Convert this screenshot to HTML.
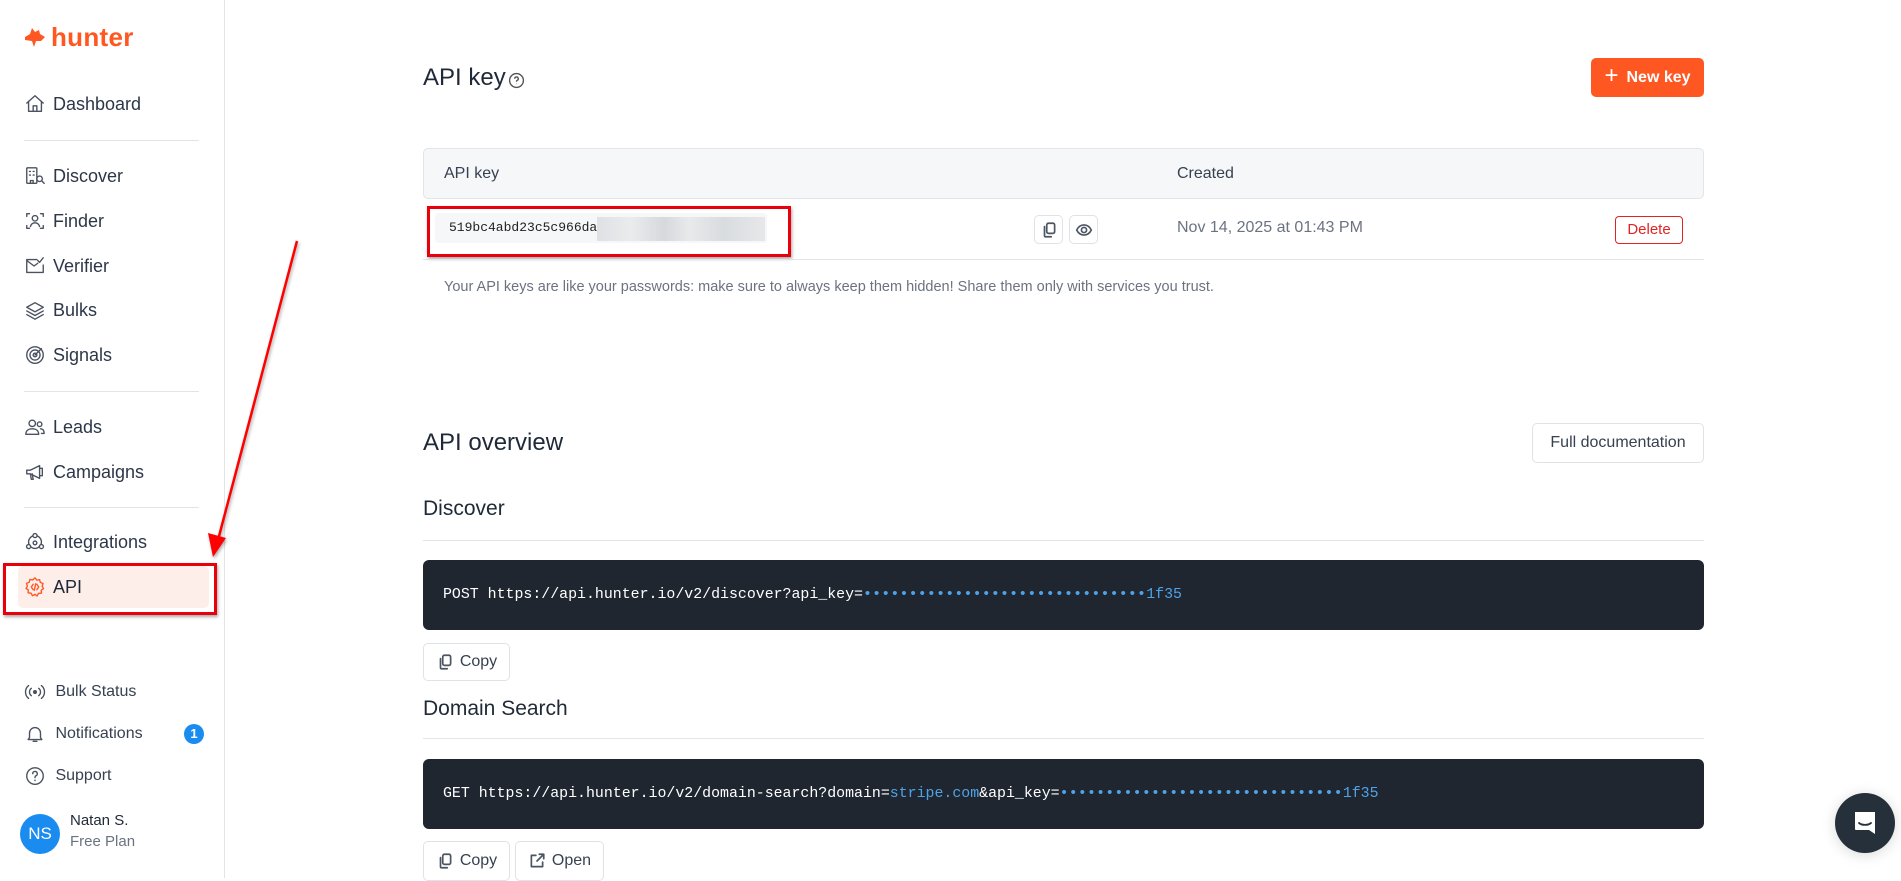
<!DOCTYPE html>
<html><head><meta charset="utf-8"><style>
*{box-sizing:border-box;margin:0;padding:0}
body{width:1901px;height:878px;overflow:hidden;background:#fff;font-family:"Liberation Sans",sans-serif;color:#1f2937;position:relative}
.a{position:absolute}
.nav{position:absolute;left:24px;font-size:18px;color:#2d3748;display:flex;align-items:center;gap:7px;height:26px}
.nav svg{width:22px;height:22px;fill:none;stroke:#4a5260;stroke-width:1.5;stroke-linecap:round;stroke-linejoin:round}
.div{position:absolute;left:24px;width:175px;height:1px;background:#e2e4e8}
.sm{font-size:16px;color:#374151;gap:5px}
.btn{position:absolute;border:1px solid #dfe2e6;border-radius:5px;background:#fff;display:flex;align-items:center;justify-content:center;gap:6px;font-size:16px;color:#374151}
.btn svg{fill:none;stroke:#4b5563;stroke-width:1.5;stroke-linecap:round;stroke-linejoin:round}
.code{position:absolute;left:423px;width:1281px;height:70px;background:#1f2630;border-radius:6px;color:#fff;font-family:"Liberation Mono",monospace;font-size:14.9px;padding-left:20px;display:flex;align-items:center;white-space:pre}
.bl{color:#4ea3e8}
.dots{color:#4ea3e8;letter-spacing:0.2px}
.h2{position:absolute;left:423px;font-size:21px;color:#1f2937}
.hr{position:absolute;left:423px;width:1281px;height:1px;background:#e2e4e8}
</style></head><body>
<!-- sidebar -->
<div class="a" style="left:224px;top:0;width:1px;height:878px;background:#e2e4e8"></div>
<svg class="a" style="left:24px;top:28px" width="22" height="20" viewBox="0 0 22 20"><path d="M1 9 L6 6 L8 0 L11 4 L15 2 L16 6 L21 9 L17 13 L12 13 L10 19 L8 13 L1 12 Z" fill="#ff5722"/></svg>
<div class="a" style="left:51px;top:22px;font-size:26px;font-weight:bold;color:#ff5722;letter-spacing:0.3px">hunter</div>

<div class="nav" style="top:91px"><svg viewBox="0 0 24 24"><path d="M3 11 L12 3 L21 11 M5 9 V20 H19 V9 M10 20 V14 H14 V20"/></svg>Dashboard</div>
<div class="div" style="top:140px"></div>
<div class="nav" style="top:163px"><svg viewBox="0 0 24 24"><rect x="3" y="3" width="11" height="17" rx="1"/><path d="M6 7h1M10 7h1M6 11h1M10 11h1M7 20v-3h3v3"/><circle cx="17" cy="15" r="3"/><path d="M19.5 17.5 L22 20"/></svg>Discover</div>
<div class="nav" style="top:208px"><svg viewBox="0 0 24 24"><path d="M3 7V4h3M18 4h3v3M21 17v3h-3M6 20H3v-3"/><circle cx="12" cy="9" r="3"/><path d="M7 18c1-3 3-4 5-4s4 1 5 4"/></svg>Finder</div>
<div class="nav" style="top:253px"><svg viewBox="0 0 24 24"><path d="M14 5H3v14h18v-8M3 6l8 6 4-3M15 6l2 2 4-5"/></svg>Verifier</div>
<div class="nav" style="top:297px"><svg viewBox="0 0 24 24"><path d="M12 4 L21 9 L12 14 L3 9 Z M3 13 L12 18 L21 13 M3 17 L12 22 L21 17"/></svg>Bulks</div>
<div class="nav" style="top:342px"><svg viewBox="0 0 24 24"><circle cx="12" cy="12" r="9"/><circle cx="12" cy="12" r="5.5"/><circle cx="12" cy="12" r="2"/><path d="M12 12 L19 5"/></svg>Signals</div>
<div class="div" style="top:391px"></div>
<div class="nav" style="top:414px"><svg viewBox="0 0 24 24"><circle cx="9" cy="8" r="3.5"/><path d="M2 20c0-4 3-6 7-6s7 2 7 6z"/><circle cx="17" cy="9" r="2.5"/><path d="M18 14c3 0 4 2 4 5h-3"/></svg>Leads</div>
<div class="nav" style="top:459px"><svg viewBox="0 0 24 24"><path d="M3 10v4h4l10 5V5L7 10zM7 14l1 6h2l-1-6M17 8h3v8h-3"/></svg>Campaigns</div>
<div class="div" style="top:507px"></div>
<div class="nav" style="top:529px"><svg viewBox="0 0 24 24"><circle cx="12" cy="12" r="7"/><circle cx="12" cy="5" r="2.2" fill="#fff"/><circle cx="5" cy="17" r="2.2" fill="#fff"/><circle cx="19" cy="17" r="2.2" fill="#fff"/><circle cx="12" cy="13" r="2"/></svg>Integrations</div>
<div class="a" style="left:18px;top:566px;width:191px;height:42px;background:#fdeeea;border-radius:5px"></div>
<div class="a" style="left:3px;top:563px;width:214px;height:52px;border:3px solid #e8000b;box-shadow:1px 2px 3px rgba(0,0,0,.35)"></div>
<div class="nav" style="top:574px;color:#1f2937"><svg viewBox="0 0 24 24" style="stroke:#ff5722"><path d="M12 2l2 2.5 3-.5 .8 3 3 1.2-1 3 1.5 2.5-2.5 1.8.2 3.2-3.2.3-1.5 2.8L12 20l-2.8 1.5-1.5-2.8-3.2-.3.2-3.2L2.2 13.5 3.7 11l-1-3 3-1.2.8-3 3 .5z"/><path d="M10 9l-2 3 2 3M14 9l2 3-2 3M12.7 8.5l-1.4 7"/></svg>API</div>
<!-- arrow -->
<svg class="a" style="left:0;top:0" width="320" height="600"><g filter="drop-shadow(1px 2px 1.5px rgba(0,0,0,.35))"><line x1="297" y1="241" x2="218" y2="540" stroke="#f00" stroke-width="2.5"/><path d="M213 557 L208 533 L226 538 Z" fill="#f00"/></g></svg>

<div class="nav sm" style="top:679px;left:24px"><svg viewBox="0 0 24 24"><circle cx="12" cy="12" r="1.5" fill="#4a5260"/><path d="M8 8a5 5 0 0 0 0 8M16 8a5 5 0 0 1 0 8M5 5a9 9 0 0 0 0 14M19 5a9 9 0 0 1 0 14"/></svg>&nbsp;Bulk Status</div>
<div class="nav sm" style="top:721px;left:24px"><svg viewBox="0 0 24 24"><path d="M6 16V11a6 6 0 0 1 12 0v5l1.5 2h-15zM10 20h4"/></svg>&nbsp;Notifications</div>
<div class="a" style="left:184px;top:724px;width:20px;height:20px;border-radius:50%;background:#1a8cf0;color:#fff;font-size:13px;font-weight:bold;text-align:center;line-height:20px">1</div>
<div class="nav sm" style="top:763px;left:24px"><svg viewBox="0 0 24 24"><circle cx="12" cy="12" r="9"/><path d="M9.5 9.5a2.5 2.5 0 1 1 3.5 2.3c-.7.3-1 .8-1 1.5v.5M12 16.5v.5"/></svg>&nbsp;Support</div>
<div class="a" style="left:20px;top:814px;width:40px;height:40px;border-radius:50%;background:#1a8cf0;color:#fff;font-size:17px;text-align:center;line-height:40px">NS</div>
<div class="a" style="left:70px;top:812px;font-size:15px;color:#1f2937">Natan S.</div>
<div class="a" style="left:70px;top:833px;font-size:15px;color:#6b7280">Free Plan</div>

<!-- main -->
<div class="a" style="left:423px;top:64px;font-size:24px;color:#1f2937">API key</div>
<svg class="a" style="left:508px;top:72px" width="17" height="17" viewBox="0 0 16 16" fill="none" stroke="#555" stroke-width="1.3"><circle cx="8" cy="8" r="6.5"/><path d="M6.3 6.3a1.7 1.7 0 1 1 2.3 1.6c-.4.2-.6.5-.6 1v.3M8 11v.4"/></svg>
<div class="a" style="left:1591px;top:58px;width:113px;height:39px;background:#ff5722;border-radius:5px;color:#fff;font-size:16px;font-weight:bold;display:flex;align-items:center;justify-content:center;gap:8px"><span style="font-size:24px;font-weight:normal;line-height:1;margin-top:-3px">+</span>New key</div>

<div class="a" style="left:423px;top:148px;width:1281px;height:51px;background:#f6f7f9;border:1px solid #e2e4e8;border-radius:5px"></div>
<div class="a" style="left:444px;top:165px;font-size:16px;color:#374151">API key</div>
<div class="a" style="left:1177px;top:165px;font-size:16px;color:#374151">Created</div>
<div class="a" style="left:435px;top:213px;width:332px;height:30px;background:#f6f7f9;border-radius:3px"></div>
<div class="a" style="left:449px;top:220px;font-family:'Liberation Mono',monospace;font-size:13px;color:#222">519bc4abd23c5c966da</div>
<div class="a" style="left:597px;top:217px;width:168px;height:24px;background:linear-gradient(90deg,#dcdfe2,#e8eaec 20%,#d3d6d9 40%,#e6e8ea 55%,#d6d9dc 75%,#e4e6e8);opacity:.9"></div>
<div class="a" style="left:427px;top:206px;width:364px;height:51px;border:3px solid #e8000b;box-shadow:1px 2px 3px rgba(0,0,0,.35)"></div>
<div class="btn" style="left:1034px;top:215px;width:29px;height:29px"><svg width="18" height="18" viewBox="0 0 16 16"><rect x="6" y="2" width="7" height="9" rx="1.5"/><path d="M4 5v8a1 1 0 0 0 1 1h5"/></svg></div>
<div class="btn" style="left:1069px;top:215px;width:29px;height:29px"><svg width="18" height="18" viewBox="0 0 16 16"><path d="M1.5 8C3 5 5.5 3.5 8 3.5S13 5 14.5 8C13 11 10.5 12.5 8 12.5S3 11 1.5 8z"/><circle cx="8" cy="8" r="2.3"/></svg></div>
<div class="a" style="left:1177px;top:219px;font-size:16px;color:#6b7280">Nov 14, 2025 at 01:43 PM</div>
<div class="a" style="left:1615px;top:216px;width:68px;height:28px;border:1px solid #e02424;border-radius:4px;color:#e02424;font-size:15px;text-align:center;line-height:26px">Delete</div>
<div class="a" style="left:423px;top:259px;width:1281px;height:1px;background:#e2e4e8"></div>
<div class="a" style="left:444px;top:279px;font-size:14.5px;color:#6b7280">Your API keys are like your passwords: make sure to always keep them hidden! Share them only with services you trust.</div>

<div class="a" style="left:423px;top:429px;font-size:24px;color:#1f2937">API overview</div>
<div class="btn" style="left:1532px;top:423px;width:172px;height:40px;font-size:16px">Full documentation</div>

<div class="h2" style="top:497px">Discover</div>
<div class="hr" style="top:540px"></div>
<div class="code" style="top:560px">POST https://api.hunter.io/v2/discover?api_key=<span class="dots">•••••••••••••••••••••••••••••••</span><span class="bl">1f35</span></div>
<div class="btn" style="left:423px;top:643px;width:87px;height:38px"><svg width="18" height="18" viewBox="0 0 16 16"><rect x="6" y="2" width="7" height="9" rx="1.5"/><path d="M4 5v8a1 1 0 0 0 1 1h5"/></svg>Copy</div>

<div class="h2" style="top:697px">Domain Search</div>
<div class="hr" style="top:738px"></div>
<div class="code" style="top:759px">GET https://api.hunter.io/v2/domain-search?domain=<span class="bl">stripe.com</span>&amp;api_key=<span class="dots">•••••••••••••••••••••••••••••••</span><span class="bl">1f35</span></div>
<div class="btn" style="left:423px;top:841px;width:87px;height:40px"><svg width="18" height="18" viewBox="0 0 16 16"><rect x="6" y="2" width="7" height="9" rx="1.5"/><path d="M4 5v8a1 1 0 0 0 1 1h5"/></svg>Copy</div>
<div class="btn" style="left:515px;top:841px;width:89px;height:40px"><svg width="18" height="18" viewBox="0 0 16 16"><path d="M7 3H3v10h10V9M10 2h4v4M14 2L8 8"/></svg>Open</div>

<div class="a" style="left:1835px;top:793px;width:60px;height:60px;border-radius:50%;background:#26303b;box-shadow:0 2px 14px rgba(0,0,0,.15)"></div>
<svg class="a" style="left:1851px;top:809px" width="28" height="28" viewBox="0 0 28 28"><path d="M4 3h20v22l-6-4H5a1 1 0 0 1-1-1z" fill="#fff"/><path d="M8 14c3 2.5 9 2.5 12 0" stroke="#26303b" stroke-width="1.8" fill="none" stroke-linecap="round"/></svg>
</body></html>
